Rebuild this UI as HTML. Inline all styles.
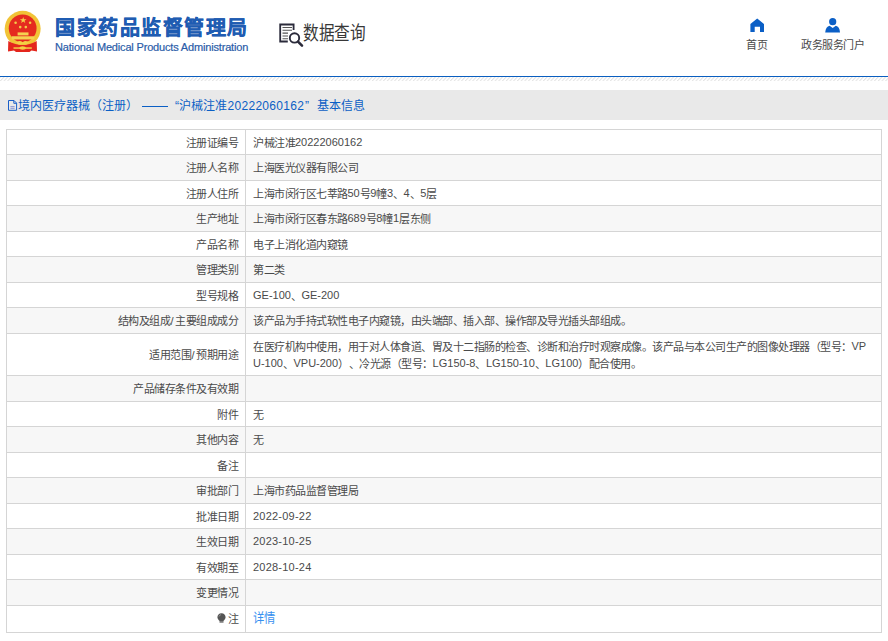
<!DOCTYPE html>
<html lang="zh-CN"><head><meta charset="utf-8">
<style>
html,body{text-spacing-trim:space-all;margin:0;padding:0;background:#fff;width:888px;height:641px;overflow:hidden;position:relative;font-family:"Liberation Sans",sans-serif;}
.abs{position:absolute;white-space:nowrap}
#title{left:55px;top:14px;font-size:20px;font-weight:bold;color:#1f5cb2;line-height:28px;letter-spacing:1.5px;-webkit-text-stroke:0.35px #1f5cb2;transform:scaleY(1.0);transform-origin:0 0}
#eng{left:55px;top:40px;font-size:11px;color:#2a5ca8;line-height:14px;letter-spacing:-0.17px;-webkit-text-stroke:0.2px #2a5ca8}
#dq{left:303px;top:20px;font-size:18px;color:#383838;line-height:26px;letter-spacing:0px;transform:scale(0.87,1.05);transform-origin:0 0}
.nav{font-size:11px;letter-spacing:-0.5px;color:#4a4a4a;line-height:14px}
#bline{left:0;top:76px;width:888px;height:1px;background:#0a5fc0}
#hatch{left:0;top:77px;width:888px;height:4px;background:repeating-linear-gradient(135deg,#fff 0,#fff 2px,#e4e4e4 2px,#e4e4e4 3px)}
#crumb{left:0;top:90px;width:888px;height:30px;background:#e9e9e9}
.ct{top:97px;font-size:12px;color:#0b5fc5;line-height:18px}
#tbl{left:6px;top:129px;width:874px;height:502px;border:1px solid #d5d5d5;}
.row{position:absolute;left:0;width:874px;border-top:1px solid #d5d5d5;}
.row.g{background:#f7f7f7}
.lab{position:absolute;right:643px;top:0;bottom:0;display:flex;align-items:center;font-size:11px;letter-spacing:-0.5px;color:#4a4a4a;white-space:nowrap;line-height:17px}
.val{position:absolute;left:246px;top:0;bottom:0;display:flex;align-items:center;font-size:11px;letter-spacing:-0.5px;color:#4a4a4a;white-space:nowrap;line-height:17px}
#vdiv{left:245px;top:129px;width:1px;height:503px;background:#d5d5d5}
.lab>div,.val>div{position:relative;top:1px}
.row.last .lab>div,.row.last .val>div{top:0}
a{color:#3790f0;text-decoration:none}
.l{letter-spacing:0;position:relative;top:-1px}
</style></head>
<body>
<!-- emblem -->
<svg class="abs" style="left:0;top:0" width="48" height="56" viewBox="0 0 48 56">
  <circle cx="22.65" cy="28.8" r="18.0" fill="#f1c336"/>
  <circle cx="22.65" cy="28.3" r="13.9" fill="#e52b1f"/>
  <path d="M8.3 41 L8.0 51.5 L14 50.5 L16 52 L29.5 52 L31.5 50.5 L37 51.5 L36.7 41 Q22.65 49 8.3 41 Z" fill="#e4261d"/>
  <path d="M23.2 16.9 l0.8 2.3 h2.5 l-2 1.5 l0.8 2.4 l-2.1 -1.5 l-2.1 1.5 l0.8 -2.4 l-2 -1.5 h2.5z" fill="#f5d24a"/>
  <circle cx="15.6" cy="22.8" r="1.3" fill="#f3cc48"/>
  <circle cx="30.1" cy="22.8" r="1.3" fill="#f3cc48"/>
  <circle cx="20.2" cy="27.1" r="1.3" fill="#f3cc48"/>
  <circle cx="25.8" cy="27.1" r="1.3" fill="#f3cc48"/>
  <path d="M17.6 32.4 h10.9 v3 h-10.9z" fill="#f5d250"/>
  <path d="M11.7 36.3 h22.7 v3.2 h-22.7z" fill="#f5d250"/>
  <path d="M16 43 q3.3 -3.5 6.65 -0.8 q3.35 -2.7 6.65 0.8 q-3.3 2.5 -6.65 1.2 q-3.35 1.3 -6.65 -1.2z" fill="#f4cf45"/>
  <path d="M13.5 47.3 h18.3 v1.5 h-18.3z" fill="#f4cf45"/>
  <ellipse cx="22.65" cy="48" rx="3.2" ry="1.7" fill="#f4cf45"/>
</svg>
<div id="title" class="abs">国家药品监督管理局</div>
<div id="eng" class="abs">National Medical Products Administration</div>
<!-- data query icon -->
<svg class="abs" style="left:276px;top:20px" width="30" height="30" viewBox="0 0 30 30">
  <path d="M17.6 10 V4.5 H4.2 V21.5 H11.8" fill="none" stroke="#2a2a3a" stroke-width="1.8"/>
  <path d="M6.5 7.5 h9.5 M6.5 10.3 h9.5 M6.5 13.1 h5.5 M6.5 16 h5.5 M6.5 18.8 h5.5" stroke="#555" stroke-width="1.1"/>
  <circle cx="18.5" cy="17.9" r="4.7" fill="none" stroke="#2a2a3a" stroke-width="1.9"/>
  <path d="M22 21.6 L26 25.6" stroke="#2a2a3a" stroke-width="2.6" stroke-linecap="round"/>
</svg>
<div id="dq" class="abs">数据查询</div>
<!-- nav -->
<svg class="abs" style="left:749px;top:17px" width="17" height="16" viewBox="0 0 17 16">
  <path d="M1.4 7 L8.2 1.6 L15 7 V15 H11 V9.8 H5.7 V15 H1.4 Z" fill="#0b5fc6"/>
</svg>
<div class="abs nav" style="left:746px;top:38px">首页</div>
<svg class="abs" style="left:824px;top:16px" width="18" height="18" viewBox="0 0 18 18">
  <circle cx="8.7" cy="5.7" r="3.6" fill="#0b5fc6"/>
  <path d="M1.2 16.5 Q1.8 10.6 5.6 9.8 L8.7 12 L11.8 9.8 Q15.6 10.6 16 16.5 Z" fill="#0b5fc6"/>
</svg>
<div class="abs nav" style="left:801px;top:38px">政务服务门户</div>
<div id="bline" class="abs"></div>
<svg class="abs" style="left:0;top:77px" width="888" height="4"><defs><pattern id="hp" width="4" height="4" patternUnits="userSpaceOnUse" patternTransform="scale(0.93,1)"><rect x="3" y="0" width="1" height="1" fill="#e3e3e3"/><rect x="0" y="0" width="1" height="1" fill="#f1f1f1"/><rect x="2" y="1" width="1" height="1" fill="#e3e3e3"/><rect x="3" y="1" width="1" height="1" fill="#f1f1f1"/><rect x="1" y="2" width="1" height="1" fill="#e3e3e3"/><rect x="2" y="2" width="1" height="1" fill="#f1f1f1"/><rect x="0" y="3" width="1" height="1" fill="#e3e3e3"/><rect x="1" y="3" width="1" height="1" fill="#f1f1f1"/></pattern></defs><rect width="888" height="4" fill="url(#hp)"/></svg>
<div id="crumb" class="abs"></div>
<svg class="abs" style="left:7px;top:99px" width="12" height="13" viewBox="0 0 12 13">
  <path d="M1.5 1.5 H7 L9.6 4.1 V11.3 H1.5 Z M6.8 1.5 V4.3 H9.6" fill="none" stroke="#1a5fc8" stroke-width="1"/>
  <path d="M3.4 7.6 h4.2 M3.4 9.3 h4.2" stroke="#7080d0" stroke-width="0.8"/>
</svg>
<div class="abs ct" style="left:18px">境内医疗器械（注册）</div>
<div class="abs" style="left:142px;top:106px;width:26px;height:1px;background:#0b5fc5"></div>
<div class="abs ct" style="left:175px">“</div>
<div class="abs ct" style="left:179px">沪械注准</div>
<div class="abs ct" style="left:227.5px;letter-spacing:0.3px">20222060162</div>
<div class="abs ct" style="left:305px">”</div>
<div class="abs ct" style="left:317px">基本信息</div>
<div id="tbl" class="abs">
<div class="row" style="top:0px;height:24px;border-top:0"><div class="lab"><div>注册证编号</div></div><div class="val"><div>沪械注准<span class="l">20222060162</span></div></div></div>
<div class="row g" style="top:24px;height:25px"><div class="lab"><div>注册人名称</div></div><div class="val"><div>上海医光仪器有限公司</div></div></div>
<div class="row" style="top:50px;height:24px"><div class="lab"><div>注册人住所</div></div><div class="val"><div>上海市闵行区七莘路<span class="l">50</span>号<span class="l">9</span>幢<span class="l">3</span>、<span class="l">4</span>、<span class="l">5</span>层</div></div></div>
<div class="row g" style="top:75px;height:25px"><div class="lab"><div>生产地址</div></div><div class="val"><div>上海市闵行区春东路<span class="l">689</span>号<span class="l">8</span>幢<span class="l">1</span>层东侧</div></div></div>
<div class="row" style="top:101px;height:24px"><div class="lab"><div>产品名称</div></div><div class="val"><div>电子上消化道内窥镜</div></div></div>
<div class="row g" style="top:126px;height:25px"><div class="lab"><div>管理类别</div></div><div class="val"><div>第二类</div></div></div>
<div class="row" style="top:152px;height:24px"><div class="lab"><div>型号规格</div></div><div class="val"><div><span class="l">GE-100</span>、<span class="l">GE-200</span></div></div></div>
<div class="row g" style="top:177px;height:25px"><div class="lab"><div>结构及组成<span style="letter-spacing:1.5px">/</span>主要组成成分</div></div><div class="val"><div>该产品为手持式软性电子内窥镜，由头端部、插入部、操作部及导光插头部组成。</div></div></div>
<div class="row" style="top:203px;height:41px"><div class="lab"><div>适用范围<span style="letter-spacing:1.5px">/</span>预期用途</div></div><div class="val"><div>在医疗机构中使用，用于对人体食道、胃及十二指肠的检查、诊断和治疗时观察成像。该产品与本公司生产的图像处理器（型号：<span class="l">VP</span><br><span class="l">U-100</span>、<span class="l">VPU-200</span>）、冷光源（型号：<span class="l">LG150-8</span>、<span class="l">LG150-10</span>、<span class="l">LG100</span>）配合使用。</div></div></div>
<div class="row g" style="top:245px;height:25px"><div class="lab"><div>产品储存条件及有效期</div></div><div class="val"><div></div></div></div>
<div class="row" style="top:271px;height:24px"><div class="lab"><div>附件</div></div><div class="val"><div>无</div></div></div>
<div class="row g" style="top:296px;height:25px"><div class="lab"><div>其他内容</div></div><div class="val"><div>无</div></div></div>
<div class="row" style="top:322px;height:24px"><div class="lab"><div>备注</div></div><div class="val"><div></div></div></div>
<div class="row g" style="top:347px;height:25px"><div class="lab"><div>审批部门</div></div><div class="val"><div>上海市药品监督管理局</div></div></div>
<div class="row" style="top:373px;height:24px"><div class="lab"><div>批准日期</div></div><div class="val"><div><span class="l" style="letter-spacing:0.22px">2022-09-22</span></div></div></div>
<div class="row g" style="top:398px;height:25px"><div class="lab"><div>生效日期</div></div><div class="val"><div><span class="l" style="letter-spacing:0.22px">2023-10-25</span></div></div></div>
<div class="row" style="top:424px;height:24px"><div class="lab"><div>有效期至</div></div><div class="val"><div><span class="l" style="letter-spacing:0.22px">2028-10-24</span></div></div></div>
<div class="row g" style="top:449px;height:25px"><div class="lab"><div>变更情况</div></div><div class="val"><div></div></div></div>
<div class="row last" style="top:475px;height:26px"><div class="lab"><div><svg width="9" height="11" viewBox="0 0 9 11" style="vertical-align:-1px;margin-right:1.5px"><path d="M4.5 0.3 C2 0.3 0.4 2.1 0.4 4.2 C0.4 5.8 1.6 6.9 2.6 8 V9.8 H6.4 V8 C7.4 6.9 8.6 5.8 8.6 4.2 C8.6 2.1 7 0.3 4.5 0.3 Z" fill="#555"/><path d="M3 9 h3" stroke="#ddd" stroke-width="0.6"/><path d="M2 3.5 Q2.5 2 4 1.6" stroke="#aaa" stroke-width="0.7" fill="none"/></svg>注</div></div><div class="val"><div><a style="font-size:13px;letter-spacing:0;display:inline-block;transform:scaleX(0.87);transform-origin:0 50%;position:relative;top:-1px">详情</a></div></div></div>
</div>
<div id="vdiv" class="abs"></div>
</body></html>
